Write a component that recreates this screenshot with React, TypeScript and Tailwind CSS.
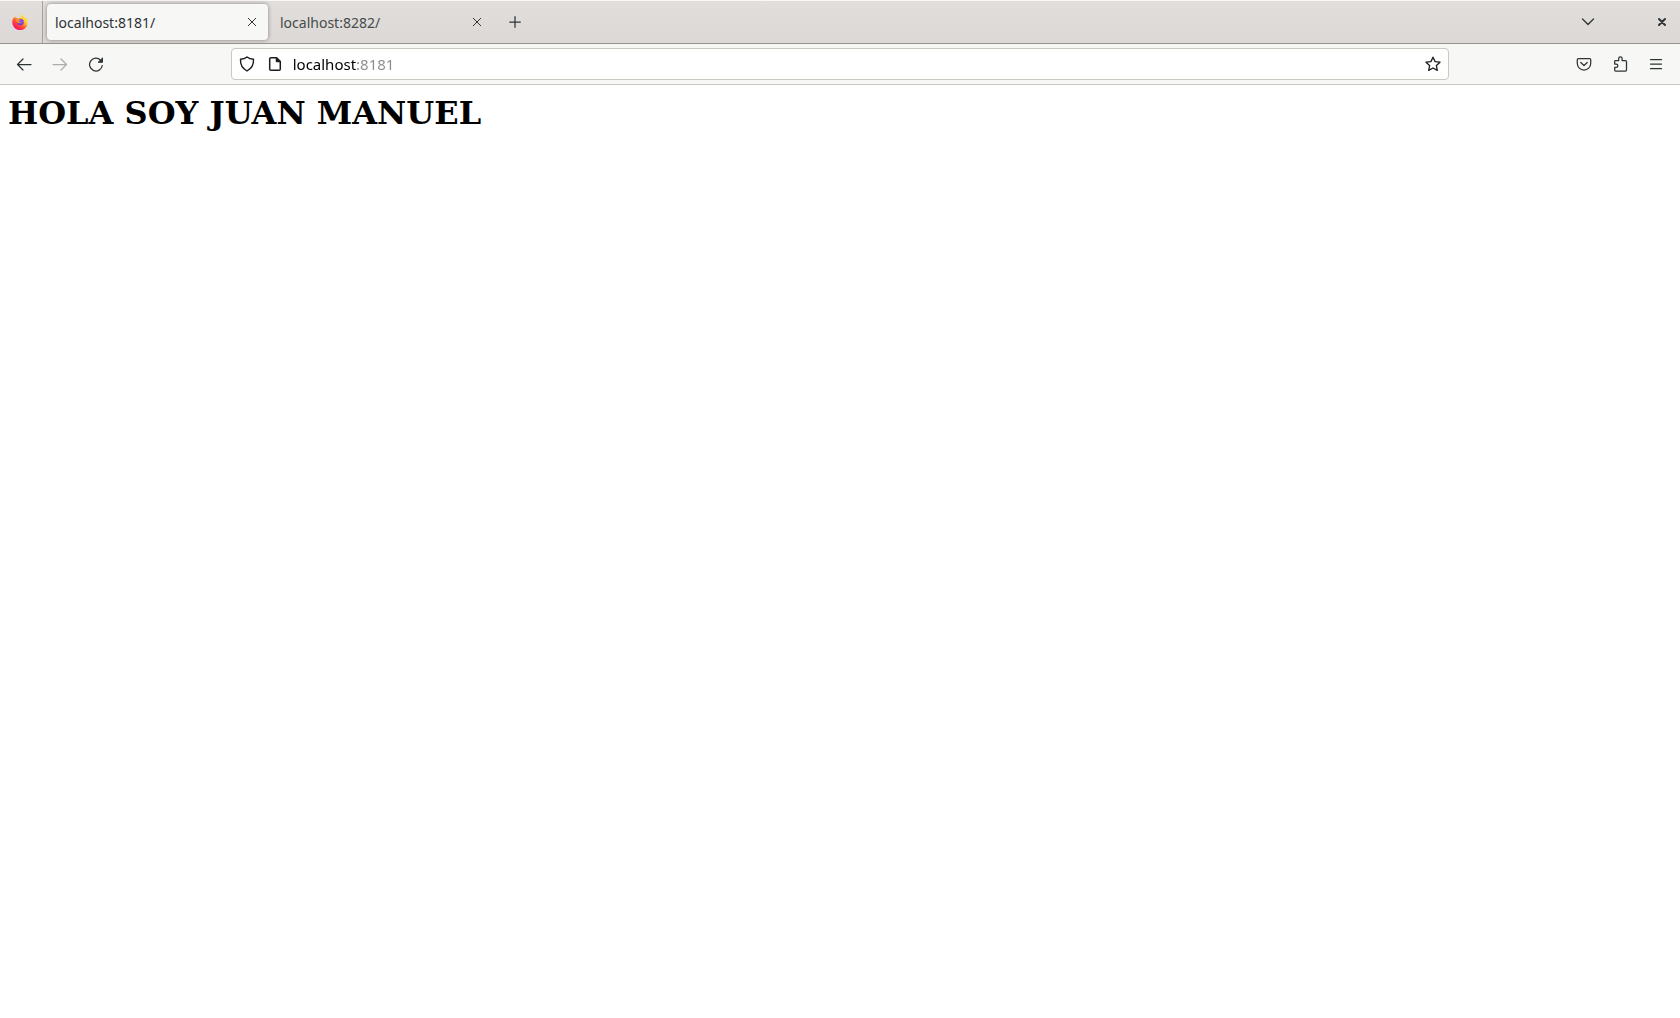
import React from "react";

type IconProps = { children: React.ReactNode; size?: number; width?: number };

function Icon({ children, size = 16, width = 1.25 }: IconProps) {
  return (
    <svg
      width={size}
      height={size}
      viewBox={`0 0 ${size} ${size}`}
      fill="none"
      stroke="currentColor"
      strokeWidth={width}
      strokeLinecap="round"
      strokeLinejoin="round"
      aria-hidden="true"
    >
      {children}
    </svg>
  );
}

function FirefoxLogo() {
  return (
    <svg width="16" height="16" viewBox="0 0 16 16" role="img" aria-label="Firefox">
      <defs>
        <linearGradient id="flame" x1="0.85" y1="0.1" x2="0.2" y2="0.95">
          <stop offset="0.05" stopColor="#fff44f" />
          <stop offset="0.35" stopColor="#ffb02a" />
          <stop offset="0.6" stopColor="#ff5634" />
          <stop offset="0.85" stopColor="#ff2154" />
          <stop offset="1" stopColor="#e31587" />
        </linearGradient>
        <radialGradient id="globe" cx="0.6" cy="0.4" r="0.6">
          <stop offset="0" stopColor="#9059ff" />
          <stop offset="1" stopColor="#6a38c8" />
        </radialGradient>
      </defs>
      <path
        fill="url(#flame)"
        d="M10.4 0c.3 1.6 1.4 2.4 2.4 3.6.4.4.6.9.7 1.3.1-.5 0-1-.1-1.4 1.7 1.3 2.5 3.4 2.3 5.5A7.7 7.400 0 0 1 .3 8.500C.2 6.500.9 4.700 1.700 3.500c0 .3 0 .6.1.9.2-.8.8-1.6 1.5-2.1-.1.6 0 1.2.3 1.5 1-.1 1.9.1 2.6.6 1-.7 2.3-.9 3.400-.5C8.800 2.600 9.300.9 10.400 0z"
      />
      <circle cx="8.4" cy="8" r="3.3" fill="url(#globe)" />
      <path fill="#ff8a2c" d="M3.400 4.800c1.400-.5 2.800-.2 3.500.5l1.700.3c-.1.9-1.400 1-1.600 1.700.1.9 1.200 1.300 2.300.9-.7 1.300-3 1.600-4.200.1-.9-1-1.700-2.300-1.700-3.500z" />
      <path fill="#ffd53c" d="M9.600 3.900c1.900.6 3 2.200 2.900 4.200.6-.4.9-1.100.9-1.800.7 1.800.2 3.900-1.200 5.100 2-.7 3.200-2.500 3.200-4.400 0-1.500-.8-2.600-1.600-3.200l-.3.9L10.600 1.300c-.7.7-1 1.600-1 2.600z" />
    </svg>
  );
}

function ToolButton({ label, dim, children }: { label: string; dim?: boolean; children: React.ReactNode }) {
  return (
    <button
      type="button"
      aria-label={label}
      disabled={dim}
      className="flex size-8 shrink-0 items-center justify-center rounded text-[#2e3436] disabled:text-[#abaeae]"
    >
      {children}
    </button>
  );
}

function Tab({ title, active }: { title: string; active?: boolean }) {
  return (
    <div
      className={
        active
          ? "flex h-9 w-[221px] items-center rounded bg-[#f7f7f5] pl-2 pr-1 shadow-[0_0_4px_rgba(0,0,0,0.4)]"
          : "flex h-9 w-[221px] items-center rounded pl-2 pr-1"
      }
    >
      <button
        type="button"
        role="tab"
        aria-selected={!!active}
        className={active ? "flex-1 pt-0.5 text-left text-[#2e3436]" : "flex-1 pt-0.5 text-left text-[#464b4c]"}
      >
        {title}
      </button>
      <button
        type="button"
        aria-label={`Close ${title}`}
        className="flex size-6 items-center justify-center text-[#2e3436]"
      >
        <Icon size={10} width={1}>
          <path d="M1.300 1.300l7.400 7.400M8.700 1.300l-7.400 7.400" />
        </Icon>
      </button>
    </div>
  );
}

export default function App() {
  return (
    <div className="flex min-h-screen flex-col bg-white font-['Noto_Sans',sans-serif] text-[14px] leading-5">
      <header>
        <div className="flex h-11 items-center border-t border-b border-t-[#f8f7f7] border-b-[#96938f] bg-linear-to-b from-[#e1dedb] to-[#dcd8d5]">
          <div className="flex h-full w-[43px] items-center border-r border-[#a5a19e] pl-3">
            <FirefoxLogo />
          </div>
          <div role="tablist" className="ml-1 flex items-center gap-1">
            <Tab title="localhost:8181/" active />
            <Tab title="localhost:8282/" />
          </div>
          <button
            type="button"
            aria-label="New tab"
            className="ml-1.5 flex size-8 items-center justify-center text-[#2e3436]"
          >
            <Icon size={12}>
              <path d="M6 .7v10.6M.7 6h10.6" />
            </Icon>
          </button>
          <div className="ml-auto flex items-center gap-[42px] pr-[2px]">
            <button
              type="button"
              aria-label="List all tabs"
              className="flex size-8 items-center justify-center text-[#2e3436]"
            >
              <Icon size={14}>
                <path d="M1.500 4L7 9.500 12.500 4" />
              </Icon>
            </button>
            <button
              type="button"
              aria-label="Close window"
              className="flex size-8 items-center justify-center text-[#2e3436]"
            >
              <Icon size={10} width={2}>
                <path d="M2 2l6 6M8 2L2 8" />
              </Icon>
            </button>
          </div>
        </div>

        <div className="flex items-center border-b border-[#cdc7c2] bg-[#f7f7f5] px-2 py-1">
          <div className="flex gap-1">
            <ToolButton label="Back">
              <Icon>
                <path d="M15 8.500H1.500M7 3L1.500 8.500 7 14" />
              </Icon>
            </ToolButton>
            <ToolButton label="Forward" dim>
              <Icon>
                <path d="M1 8.500h13.500M9 3l5.500 5.500L9 14" />
              </Icon>
            </ToolButton>
            <ToolButton label="Reload">
              <Icon>
                <path d="M12.600 4.200A6.400 6.400 0 1 0 14.300 9.500" />
                <path d="M14.500 2.300v4h-4z" fill="currentColor" strokeWidth="1" />
              </Icon>
            </ToolButton>
          </div>
          <div className="flex-[4]" />
          <div className="flex h-8 flex-[41] items-center rounded border border-[#cdc7c2] bg-white text-[#1c1c1c]">
            <button type="button" aria-label="Tracking protection" className="ml-[7px]">
              <Icon width={1.4}>
                <path d="M8 1C6.500 2.300 4 3.200 1.500 3.300c-.3 4.900 1.500 9 6.500 11.700 5-2.700 6.800-6.800 6.500-11.700C12 3.200 9.500 2.300 8 1z" />
              </Icon>
            </button>
            <button type="button" aria-label="Site information" className="ml-3">
              <Icon width={1.5}>
                <path d="M9.500 1.700H4A1.300 1.300 0 0 0 2.700 3v10A1.300 1.300 0 0 0 4 14.300h8a1.300 1.300 0 0 0 1.300-1.300V5.500z" />
                <path d="M9.500 2v3.500h3.500z" fill="currentColor" />
              </Icon>
            </button>
            <input
              type="text"
              aria-label="Address"
              defaultValue="localhost:8181"
              className="ml-[10px] min-w-0 flex-1 bg-[linear-gradient(90deg,#000_63px,#8b8b8b_63px)] bg-clip-text text-[15px] leading-6 text-transparent caret-black outline-none"
            />
            <button type="button" aria-label="Bookmark this page" className="mr-[7px]">
              <Icon width={1.3}>
                <path d="M8 1.200l2.100 4.400 4.900.6-3.600 3.300.9 4.900L8 12l-4.300 2.400.9-4.900L1 6.200l4.900-.6z" />
              </Icon>
            </button>
          </div>
          <div className="flex-[4]" />
          <div className="flex gap-1">
            <ToolButton label="Save to Pocket">
              <Icon>
                <path d="M2.500 2.500h11a1.200 1.200 0 0 1 1.200 1.200v3.800a6.700 6.500 0 0 1-13.400 0V3.700a1.200 1.200 0 0 1 1.200-1.200z" />
                <path d="M4.800 6.500L8 9.500l3.200-3" />
              </Icon>
            </ToolButton>
            <ToolButton label="Extensions">
              <Icon>
                <path d="M2.700 8V5.200c0-.4.3-.7.7-.7h3.300V2.600a1.700 1.700 0 0 1 3.400 0v1.900h3.500c.5 0 .9.4.9.9v8.700c0 .5-.4.9-.9.9H3.600c-.5 0-.9-.4-.9-.9v-2.800h1.500a1.650 1.650 0 0 0 0-3.300z" />
              </Icon>
            </ToolButton>
            <ToolButton label="Open application menu">
              <Icon>
                <path d="M2.500 3.500h11M2.500 8h11M2.500 12.500h11" />
              </Icon>
            </ToolButton>
          </div>
        </div>
      </header>

      <main className="p-2">
        <h1 className="font-['DejaVu_Serif',serif] text-[32px] leading-10 font-bold text-black">
          HOLA SOY JUAN MANUEL
        </h1>
      </main>
    </div>
  );
}
